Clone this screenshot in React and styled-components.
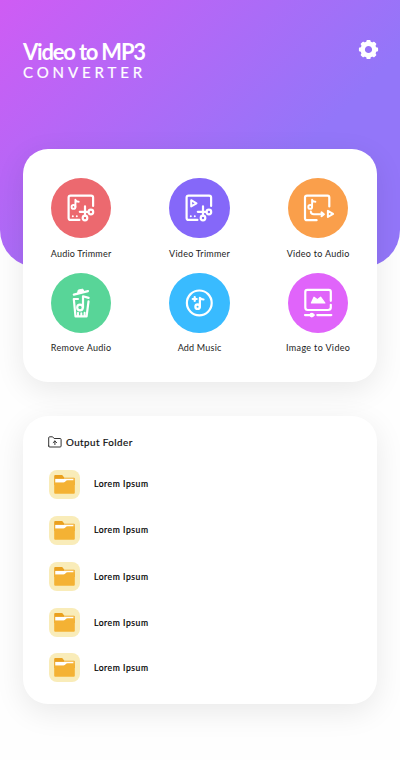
import React from "react";
import styled, { createGlobalStyle } from "styled-components";

const GlobalStyle = createGlobalStyle`
  *, *::before, *::after { box-sizing: border-box; }
  body { margin: 0; background: #fefefe; font-family: Lato, "Open Sans", sans-serif; }
`;

const Screen = styled.main`
  width: 400px;
  height: 760px;
  overflow: hidden;
  background: #fefefe;
`;

const Header = styled.header`
  display: flex;
  justify-content: space-between;
  align-items: flex-start;
  height: 267px;
  padding: 38px 21px 0 23px;
  border-radius: 0 0 37px 37px;
  background: linear-gradient(135deg, #cf5cf4 0%, #9376f9 68%, #9376f9 100%);
  color: #fff;
`;

const Brand = styled.h1`
  display: flex;
  flex-direction: column;
  margin: 0;
  font-weight: 400;
`;

const BrandName = styled.span`
  font-size: 22px;
  line-height: 27px;
  font-weight: 700;
  letter-spacing: -1.2px;
  white-space: nowrap;
`;

const BrandSub = styled.span`
  font-size: 15px;
  line-height: 15px;
  letter-spacing: 3.9px;
  -webkit-text-stroke: 0.2px #fff;
`;

const SettingsButton = styled.button`
  width: 21px;
  height: 21px;
  margin-top: 1px;
  padding: 0;
  border: 0;
  background: none;
  color: #fff;
  svg { display: block; }
`;

const Card = styled.section`
  width: 354px;
  margin: 0 auto;
  border-radius: 25px;
  background: #fff;
  box-shadow: 0 8px 30px rgba(0, 0, 0, 0.085);
`;

const ToolsCard = styled(Card)`
  display: grid;
  grid-template-columns: repeat(3, 82px);
  grid-auto-rows: 95px;
  justify-content: center;
  column-gap: 36.5px;
  height: 233.5px;
  margin-top: -118.3px;
  padding-top: 29.1px;
  padding-right: 1px;
`;

const Tool = styled.div`
  display: flex;
  flex-direction: column;
  align-items: center;
`;

const ToolCircle = styled.span`
  width: 60.5px;
  height: 60.5px;
  border-radius: 50%;
  background: ${(p) => p.$color};
  svg { display: block; }
`;

const ToolLabel = styled.span`
  margin-top: ${(p) => p.$gap}px;
  margin-right: -${(p) => p.$spacing}px;
  font-size: 9px;
  line-height: 12px;
  letter-spacing: ${(p) => p.$spacing}px;
  color: #1c1c1c;
  white-space: nowrap;
`;

const FolderCard = styled(Card)`
  height: 288px;
  margin-top: 34px;
  padding: 18px 25px 0;
`;

const FolderHeading = styled.h2`
  display: flex;
  align-items: center;
  gap: 4px;
  height: 16px;
  margin: 0 0 19.7px;
  font-size: 9.8px;
  line-height: 14px;
  font-weight: 400;
  letter-spacing: 0.44px;
  color: #111;
  -webkit-text-stroke: 0.2px #111;
`;

const FileList = styled.ul`
  display: flex;
  flex-direction: column;
  gap: 16.9px;
  margin: 0;
  padding: 0 0 0 1px;
  list-style: none;
`;

const FileRow = styled.li`
  display: flex;
  align-items: center;
  gap: 14px;
  height: 29px;
`;

const FileBadge = styled.span`
  width: 31px;
  height: 29px;
  border-radius: 8px;
  background: #f9ecb9;
  svg { display: block; }
`;

const FileName = styled.span`
  padding-top: ${(p) => p.$drop}px;
  font-size: 8.6px;
  line-height: 12px;
  letter-spacing: 0.55px;
  color: #000;
  -webkit-text-stroke: 0.2px #000;
`;

const Glyph = ({ children }) => (
  <svg width="60.5" height="60.5" viewBox="0 0 60.5 60.5" fill="none" stroke="#fff" strokeWidth="2.2" strokeLinecap="round" strokeLinejoin="round">
    {children}
  </svg>
);

const SmallNote = () => (
  <>
    <circle cx="22.5" cy="28.9" r="1.9" strokeWidth="1.9" />
    <path d="M24.4 29V21.8c.5 1.4 1.3 1.9 3.3 1.9" strokeWidth="1.9" />
  </>
);

const Scissors = () => (
  <>
    <path d="M42.1 28v-8.4a2 2 0 0 0-2-2H19.6a2 2 0 0 0-2 2v20.3a2 2 0 0 0 2 2h8.8" />
    <path d="M34 28.3v9.5M28.8 33.8h8.4" />
    <circle cx="39.9" cy="34" r="2.3" />
    <circle cx="34" cy="40" r="2.3" />
    <path d="M21.8 38.2h.01M25.8 38.2h.01" strokeWidth="2" />
  </>
);

const AudioTrimIcon = () => (
  <Glyph>
    <Scissors />
    <SmallNote />
  </Glyph>
);

const VideoTrimIcon = () => (
  <Glyph>
    <Scissors />
    <path d="M22.2 22.2v6.2l5.3-3.1z" strokeWidth="2" />
  </Glyph>
);

const ConvertIcon = () => (
  <Glyph>
    <path d="M41.3 28.5v-9.1a1.8 1.8 0 0 0-1.8-1.8H19a2 2 0 0 0-2 2v20.6a2 2 0 0 0 2 2h9.6" />
    <g transform="translate(-.3 0)"><SmallNote /></g>
    <path d="M22.8 33.5c0 2 1 2.8 3 2.8h9.7M33.5 34.4l2.4 1.9-2.4 1.9" strokeWidth="2" />
    <path d="M39.9 32.8v6.2l5.2-3.1z" strokeWidth="2" />
  </Glyph>
);

const TrashIcon = () => (
  <Glyph>
    <path d="M22.8 21.6l14.2-3.5" strokeWidth="2.2" />
    <path d="M26.5 20.5l.7-3.4 4.6-1 1.2 2.6z" fill="#fff" strokeWidth="1" />
    <path d="M27 26h-4.2l1.7 17.4h11.1l1.9-15" />
    <circle cx="29" cy="34.5" r="2.8" strokeWidth="2.2" />
    <path d="M32 34.5V23.3l5.6 1.6" strokeWidth="2.2" />
    <path d="M27 39.8V43M30.3 40.3V43M33.6 39.8V43" strokeWidth="2" />
  </Glyph>
);

const AddMusicIcon = () => (
  <Glyph>
    <circle cx="30.3" cy="29.9" r="12.4" strokeWidth="2.2" />
    <circle cx="28.6" cy="33.7" r="2.2" strokeWidth="2.3" />
    <path d="M30.9 33.8v-9c.6 1.2 1.6 1.6 3.6 1.7" strokeWidth="2.2" />
    <path d="M25.7 24v4M23.7 26h4" strokeWidth="2.2" />
  </Glyph>
);

const ImageIcon = () => (
  <Glyph>
    <path d="M42.8 27.8V18.8a2 2 0 0 0-2-2H19.3a2 2 0 0 0-2 2v15.8a2.4 2.4 0 0 0 2.4 2.4h20.2c2 0 2.9-1 2.9-2.5v-2.7" />
    <path d="M23.4 30l2.6-5.8 3.4 2.6 3.2-2.6 4.3 5.8z" fill="#fff" strokeWidth="1.2" />
    <path d="M17 42.1h8.8M29.3 42.1h14" />
    <circle cx="23.8" cy="42.1" r="2.3" fill="#fff" stroke="none" />
  </Glyph>
);

const GearIcon = () => (
  <svg width="21" height="21" viewBox="-10.5 -10.5 21 21" fill="currentColor">
    <circle r="5.8" fill="none" stroke="currentColor" strokeWidth="4.4" />
    {[0, 45, 90, 135, 180, 225, 270, 315].map((a) => (
      <path key={a} transform={`rotate(${a})`} d="M-2.5-6L-2-8.9a.9.9 0 0 1 .9-.7h2.2a.9.9 0 0 1 .9.7L2.5-6z" />
    ))}
  </svg>
);

const UploadFolderIcon = () => (
  <svg width="14" height="12" viewBox="0 0 14 12" fill="none" stroke="#333" strokeLinecap="round" strokeLinejoin="round">
    <path d="M.7 10V1.8a1 1 0 0 1 1-1h2.9l1.5 1.7h6a1 1 0 0 1 1 1V10a1 1 0 0 1-1 1H1.7a1 1 0 0 1-1-1z" />
    <path d="M6.9 8.6V5M5.2 6.6L6.9 5l1.7 1.6" />
  </svg>
);

const FolderIcon = () => (
  <svg width="31" height="29" viewBox="0 0 31 29">
    <path d="M5.2 6.1a1 1 0 0 1 1-1h7l2.2 2.6H25a.8.8 0 0 1 .8.8V15H5.2z" fill="#eaa01e" />
    <path d="M15 7.9h10.1a.7.7 0 0 1 .7.7V12H15z" fill="#f5bd55" />
    <path d="M6.2 8.9h18.1v4H6.2z" fill="#fff" />
    <path d="M5.2 12.4h9.4c2 0 2-2.2 4-2.2h7.2v12.6a1 1 0 0 1-1 1H6.2a1 1 0 0 1-1-1z" fill="#f4b234" />
  </svg>
);

const tools = [
  { label: "Audio Trimmer", color: "#ec696f", icon: AudioTrimIcon, spacing: 0.2 },
  { label: "Video Trimmer", color: "#8568f9", icon: VideoTrimIcon, spacing: 0.25 },
  { label: "Video to Audio", color: "#fa9f4b", icon: ConvertIcon, spacing: 0.28 },
  { label: "Remove Audio", color: "#58d598", icon: TrashIcon, spacing: 0.3 },
  { label: "Add Music", color: "#39bbff", icon: AddMusicIcon, spacing: 0.2 },
  { label: "Image to Video", color: "#e064fa", icon: ImageIcon, spacing: 0.35 },
];

const files = [
  { name: "Lorem Ipsum", drop: 0 },
  { name: "Lorem Ipsum", drop: 0 },
  { name: "Lorem Ipsum", drop: 1.4 },
  { name: "Lorem Ipsum", drop: 1.4 },
  { name: "Lorem Ipsum", drop: 0 },
];

export default function App() {
  return (
    <>
      <GlobalStyle />
      <Screen>
        <Header>
          <Brand>
            <BrandName>Video to MP3</BrandName>
            <BrandSub>CONVERTER</BrandSub>
          </Brand>
          <SettingsButton aria-label="Settings">
            <GearIcon />
          </SettingsButton>
        </Header>
        <ToolsCard>
          {tools.map(({ label, color, icon: Icon, spacing }, i) => (
            <Tool key={label}>
              <ToolCircle $color={color}>
                <Icon />
              </ToolCircle>
              <ToolLabel $spacing={spacing} $gap={i < 3 ? 9.8 : 8.8}>{label}</ToolLabel>
            </Tool>
          ))}
        </ToolsCard>
        <FolderCard>
          <FolderHeading>
            <UploadFolderIcon />
            Output Folder
          </FolderHeading>
          <FileList>
            {files.map(({ name, drop }, i) => (
              <FileRow key={i}>
                <FileBadge>
                  <FolderIcon />
                </FileBadge>
                <FileName $drop={drop}>{name}</FileName>
              </FileRow>
            ))}
          </FileList>
        </FolderCard>
      </Screen>
    </>
  );
}
